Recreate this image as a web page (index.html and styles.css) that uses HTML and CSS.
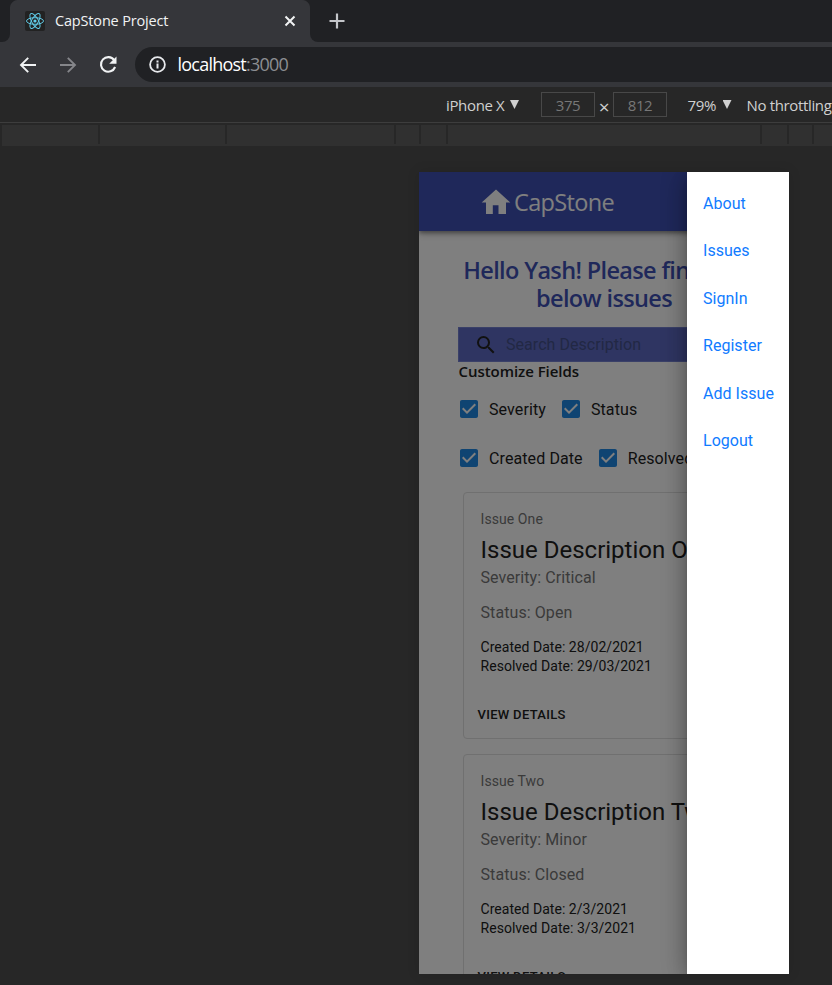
FILE: index.html
```html
<!DOCTYPE html>
<html lang="en">
<head>
<meta charset="utf-8">
<title>CapStone Project</title>
<link rel="stylesheet" href="styles.css">
</head>
<body>
<svg class="defs" width="0" height="0">
  <symbol id="check" viewBox="0 0 24 24"><path d="M19 3H5c-1.11 0-2 .9-2 2v14c0 1.1.89 2 2 2h14c1.11 0 2-.9 2-2V5c0-1.1-.89-2-2-2z" fill="#1f88e5"/><path d="M10 17l-5-5 1.410-1.410L10 14.170l7.590-7.590L19 8z" fill="#fff"/></symbol>
</svg>
<div class="tabs">
  <div class="tab-edge"></div>
  <div class="tab">
    <svg class="favicon" width="20" height="20" viewBox="0 0 20 20"><rect width="20" height="20" rx="2" fill="#222"/><g fill="none" stroke="#61cdea" stroke-width=".95"><ellipse cx="10" cy="10" rx="8.500" ry="3.300"/><ellipse cx="10" cy="10" rx="8.500" ry="3.300" transform="rotate(60 10 10)"/><ellipse cx="10" cy="10" rx="8.500" ry="3.300" transform="rotate(120 10 10)"/></g><circle cx="10" cy="10" r="1.600" fill="#61cdea"/></svg>
    <span class="tab-title">CapStone Project</span>
    <svg class="close" width="12" height="12" viewBox="0 0 12 12"><path d="M1.500 1.500l9 9M10.500 1.500l-9 9" stroke="#f1f3f4" stroke-width="2"/></svg>
  </div>
  <div class="tab-rest"><svg width="16" height="16" viewBox="0 0 16 16"><path d="M8 .5v15M.5 8h15" stroke="#c4c6ca" stroke-width="2.200"/></svg></div>
</div>
<div class="toolbar">
  <svg width="18" height="18" viewBox="0 0 18 18" fill="none" stroke="#f1f3f4" stroke-width="1.900"><path d="M17 9H2.500M9.200 1.800L2 9l7.200 7.200"/></svg>
  <svg width="18" height="18" viewBox="0 0 18 18" fill="none" stroke="#85868a" stroke-width="1.900"><path d="M1 9h14.500M8.800 1.800L16 9l-7.200 7.200"/></svg>
  <svg width="20" height="20" viewBox="0 0 20 20"><path d="M16.200 5.100A7.300 7.300 0 1 0 17.100 12" fill="none" stroke="#f1f3f4" stroke-width="2.100"/><path d="M18.500 1.500v7.300h-7.300z" fill="#f1f3f4"/></svg>
  <div class="address">
    <svg width="17" height="17" viewBox="0 0 17 17"><circle cx="8.500" cy="8.500" r="7.400" fill="none" stroke="#e8eaed" stroke-width="1.800"/><path d="M7.500 7.500h2v5h-2zM7.500 4.400h2v2h-2z" fill="#e8eaed"/></svg>
    <span class="host">localhost<span class="port">:3000</span></span>
  </div>
</div>
<div class="device-bar">
  <span class="dev-name">iPhone X</span><i class="caret"></i>
  <span class="dim">375</span><span class="times">×</span><span class="dim dim-h">812</span>
  <span class="zoom">79%</span><i class="caret"></i>
  <span class="throttle">No throttling</span>
</div>
<div class="media-bar"><i></i><i></i><i></i><i></i><i></i><i></i><i></i><i></i><i></i></div>
<div class="stage">
  <div class="phone">
    <header class="app-bar">
      <svg width="30" height="26" viewBox="0 0 30 26"><path d="M15 .5L.7 13.600H5V25h6.800v-8.800h5.700V25H25V13.600h4.300z" fill="#fff"/></svg>
      <span class="brand">CapStone</span>
    </header>
    <h1>Hello Yash! Please find the<br>below issues</h1>
    <div class="search">
      <svg width="24" height="24" viewBox="0 0 24 24"><path d="M15.500 14h-.79l-.28-.27A6.470 6.470 0 0 0 16 9.500 6.500 6.500 0 1 0 9.500 16c1.610 0 3.090-.59 4.230-1.570l.27.28v.79l5 4.990L20.490 19l-4.990-5zm-6 0C7.010 14 5 11.990 5 9.500S7.010 5 9.500 5 14 7.010 14 9.500 11.990 14 9.500 14z" fill="#222"/></svg>
      <span>Search Description</span>
    </div>
    <h2>Customize Fields</h2>
    <div class="checks">
      <label><svg width="24" height="24"><use href="#check"/></svg><span>Severity</span></label>
      <label><svg width="24" height="24"><use href="#check"/></svg><span>Status</span></label>
    </div>
    <div class="checks">
      <label><svg width="24" height="24"><use href="#check"/></svg><span>Created Date</span></label>
      <label><svg width="24" height="24"><use href="#check"/></svg><span>Resolved Date</span></label>
    </div>
    <article class="card">
      <p class="name">Issue One</p>
      <h3>Issue Description One</h3>
      <p class="meta">Severity: Critical</p>
      <p class="meta status">Status: Open</p>
      <p class="date">Created Date: 28/02/2021</p>
      <p class="date">Resolved Date: 29/03/2021</p>
      <div class="view">VIEW DETAILS</div>
    </article>
    <article class="card">
      <p class="name">Issue Two</p>
      <h3>Issue Description Two</h3>
      <p class="meta">Severity: Minor</p>
      <p class="meta status">Status: Closed</p>
      <p class="date">Created Date: 2/3/2021</p>
      <p class="date">Resolved Date: 3/3/2021</p>
      <div class="view">VIEW DETAILS</div>
    </article>
    <div class="backdrop"></div>
    <nav class="drawer">
      <a>About</a><a>Issues</a><a>SignIn</a><a>Register</a><a>Add Issue</a><a>Logout</a>
    </nav>
  </div>
</div>
</body>
</html>
```
FILE: styles.css
```css
* { box-sizing: border-box; }
body { margin: 0; width: 832px; height: 985px; overflow: hidden; background: #272727; color: #ddd; font-family: "Open Sans", sans-serif; }
.defs { position: absolute; }
svg { display: block; flex: none; }
h1, h2, h3, p { margin: 0; font-weight: 400; }
span { white-space: nowrap; }

.tabs { display: flex; height: 42px; background: #35363a; }
.tab-edge { width: 10px; background: #202124; border-radius: 0 0 8px 0; }
.tab { width: 300px; display: flex; align-items: center; padding: 0 14px 0 15px; position: relative; }
.tab::before, .tab::after { content: ""; position: absolute; top: 0; width: 8px; height: 8px; }
.tab::before { left: 0; background: radial-gradient(circle at 8px 8px, #35363a 7.500px, #202124 8.500px); }
.tab::after { right: 0; background: radial-gradient(circle at 0 8px, #35363a 7.500px, #202124 8.500px); }
.tab-title { margin: -2px 0 0 10px; flex: 1; font-size: 14.500px; letter-spacing: -.17px; color: #f1f3f4; }
.tab-rest { flex: 1; padding: 13px 0 0 19px; background: #202124; border-radius: 0 0 0 8px; }

.toolbar { display: flex; align-items: center; height: 45px; padding-left: 19px; background: #35363a; }
.toolbar > svg { margin-right: 21.500px; }
.toolbar > svg:nth-child(3) { margin-right: 17px; }
.address { flex: 1; height: 35px; border-radius: 18px 0 0 18px; background: #202124; display: flex; align-items: center; padding-left: 14px; }
.host { margin: -2px 0 0 11.500px; font-size: 18px; letter-spacing: -.77px; color: #fff; }
.port { color: #8c8e92; }

.device-bar { display: flex; align-items: center; height: 36px; padding-left: 446px; border-bottom: 1px solid #3d3d3d; font-size: 15px; letter-spacing: -.35px; color: #d0d0d0; background: #272727; overflow: hidden; }
.dev-name { width: 64px; }
.caret { flex: none; width: 9px; height: 9px; background: #d0d0d0; clip-path: polygon(0 0, 100% 0, 50% 100%); }
.dim { flex: none; width: 54px; height: 25px; margin-left: 22px; border: 1px solid #484848; line-height: 24px; text-align: center; color: #777; }
.times { width: 18px; text-align: center; padding-top: 4px; font-size: 19px; }
.dim-h { margin-left: 0; }
.zoom { margin-left: 20.500px; width: 35px; }
.throttle { margin-left: 15px; }

.media-bar { display: grid; grid-template-columns: 96px 125px 167px 23px 25px 312px 25px 23px 20px; gap: 2px; height: 21px; margin: 2px 0 0 2px; padding-bottom: 2px; background: linear-gradient(#272727 19px, #303030 19px); }
.media-bar i { background: #303030; }

.stage { height: 839px; padding: 26px 0 0 419px; background: #272727; }
.phone { position: relative; width: 370px; height: 802px; overflow: hidden; background: #fff; font-family: Roboto, sans-serif; box-shadow: 0 0 12px rgba(0,0,0,.12); color: #212121; }
.app-bar { height: 59px; background: #3f51b5; box-shadow: 0 2px 4px rgba(0,0,0,.35), 0 3px 8px rgba(0,0,0,.2); display: flex; align-items: center; padding-left: 62px; }
.brand { margin-left: 3px; padding-top: 1px; font: 23.500px "Open Sans", sans-serif; letter-spacing: -.65px; color: #fff; }
h1 { margin-top: 25px; font: 600 23.500px/28px "Open Sans", sans-serif; letter-spacing: -.65px; color: #3f51b5; text-align: center; white-space: nowrap; }
.search { width: 291px; height: 35px; margin: 15px 0 0 39px; padding-left: 15px; background: #5e6bc4; border: 1px solid #7480d0; display: flex; align-items: center; font-size: 16px; color: #44508a; }
.search span { margin-left: 8px; letter-spacing: .05px; }
h2 { margin: -1px 0 0 39.500px; height: 20px; font: 600 15px/20px "Open Sans", sans-serif; letter-spacing: -.05px; }
.checks { display: flex; height: 49px; margin-left: 38px; width: 330px; overflow: hidden; }
.checks label { display: flex; align-items: center; flex: none; margin-right: 13px; }
.checks svg { margin-bottom: 1px; }
.checks span { margin-left: 8px; font-size: 16px; letter-spacing: .1px; }
h2 + .checks { margin-top: 4px; }
.card { width: 282px; height: 247px; margin: 9px 0 15px 44px; padding: 15px 16px 0 16.500px; border: 1px solid #e0e0e0; border-radius: 4px; white-space: nowrap; overflow: hidden; }
.card + .card { margin-top: 0; }
.name { font-size: 14px; line-height: 22px; letter-spacing: .08px; color: #757575; }
h3 { font-size: 24px; line-height: 40px; letter-spacing: 0; }
.meta { font-size: 16px; line-height: 20px; letter-spacing: .08px; margin-top: -2px; color: #757575; }
.meta.status { margin: 15px 0; }
.date { font-size: 14px; line-height: 19px; letter-spacing: .04px; }
.view { margin: 29px 0 0 -3px; font-size: 13px; font-weight: 500; line-height: 20px; letter-spacing: .3px; }
.backdrop { position: absolute; inset: 0; background: rgba(0,0,0,.5); }
.drawer { position: absolute; top: 0; right: 0; width: 102px; height: 802px; background: #fff; padding: 8px 0 0 16px; box-shadow: 0 6px 8px -4px rgba(0,0,0,.2), 0 10px 20px rgba(0,0,0,.14), 0 0 24px rgba(0,0,0,.3); }
.drawer a { display: block; height: 47.400px; line-height: 47.400px; font-size: 16px; letter-spacing: .03px; color: #107bff; white-space: nowrap; }
```
